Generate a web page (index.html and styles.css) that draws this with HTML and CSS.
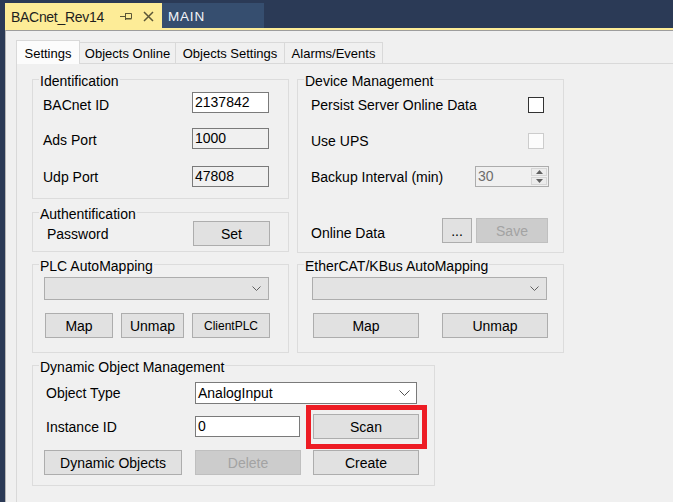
FILE: index.html
```html
<!DOCTYPE html>
<html>
<head>
<meta charset="utf-8">
<link rel="stylesheet" href="styles.css">
</head>
<body>
<div class="doc-tabs">
  <div class="doc-tab active">
    <span class="doc-title">BACnet_Rev14</span>
    <svg class="pin" width="12" height="8" viewBox="0 0 12 8"><path d="M0 3.5H5M5.5 0V7M5.5 0.5H11.5V5.5H5.5M5.5 6H11.5" fill="none" stroke="#5b5637" stroke-width="1"/></svg>
    <svg class="close" width="11" height="11" viewBox="0 0 11 11"><path d="M1 1L10 10M10 1L1 10" stroke="#5b5637" stroke-width="1.5"/></svg>
  </div>
  <div class="doc-tab main">MAIN</div>
</div>
<div class="well">
  <div class="panel">
    <div class="tabstrip">
      <div class="tab sel">Settings</div>
      <div class="tab w-online">Objects Online</div>
      <div class="tab w-osettings">Objects Settings</div>
      <div class="tab w-alarms">Alarms/Events</div>
    </div>
    <div class="page">
      <div class="row-top">
        <div class="col-left">
          <div class="group g-ident">
            <div class="gtitle">Identification</div>
            <div class="gbody">
              <div class="frow ident-r1"><span class="lbl nudge4">BACnet ID</span><div class="textbox w77">2137842</div></div>
              <div class="frow ident-r2"><span class="lbl nudge2">Ads Port</span><div class="textbox ro w77">1000</div></div>
              <div class="frow ident-r3"><span class="lbl">Udp Port</span><div class="textbox ro w77">47808</div></div>
            </div>
          </div>
          <div class="group g-auth">
            <div class="gtitle">Authentification</div>
            <div class="gbody">
              <div class="frow auth-r1"><span class="lbl">Password</span><div class="btn w77">Set</div></div>
            </div>
          </div>
        </div>
        <div class="group g-device">
          <div class="gtitle">Device Management</div>
          <div class="gbody">
            <div class="frow dev-r1"><span class="lbl">Persist Server Online Data</span><div class="check"></div></div>
            <div class="frow dev-r2"><span class="lbl">Use UPS</span><div class="check dis"></div></div>
            <div class="frow dev-r3"><span class="lbl">Backup Interval (min)</span>
              <div class="numeric"><span class="num-val">30</span>
                <div class="spin">
                  <div class="spin-btn"><svg width="7" height="4" viewBox="0 0 7 4"><path d="M0 4L3.5 0L7 4Z" fill="#606060"/></svg></div>
                  <div class="spin-btn"><svg width="7" height="4" viewBox="0 0 7 4"><path d="M0 0L3.5 4L7 0Z" fill="#606060"/></svg></div>
                </div>
              </div>
            </div>
            <div class="frow dev-r4"><span class="lbl nudge4">Online Data</span>
              <div class="btn-pair"><div class="btn w30">...</div><div class="btn dis w72">Save</div></div>
            </div>
          </div>
        </div>
      </div>
      <div class="row-mid">
        <div class="group g-plc">
          <div class="gtitle">PLC AutoMapping</div>
          <div class="gbody">
            <div class="combo plc-combo"><svg width="9" height="5" viewBox="0 0 9 5"><path d="M0.5 0.5L4.5 4.5L8.5 0.5" fill="none" stroke="#606060"/></svg></div>
            <div class="brow plc-btns">
              <div class="btn w68">Map</div>
              <div class="btn w63">Unmap</div>
              <div class="btn w78 small">ClientPLC</div>
            </div>
          </div>
        </div>
        <div class="group g-ecat">
          <div class="gtitle">EtherCAT/KBus AutoMapping</div>
          <div class="gbody">
            <div class="combo ecat-combo"><svg width="9" height="5" viewBox="0 0 9 5"><path d="M0.5 0.5L4.5 4.5L8.5 0.5" fill="none" stroke="#606060"/></svg></div>
            <div class="brow ecat-btns">
              <div class="btn w106">Map</div>
              <div class="btn w106">Unmap</div>
            </div>
          </div>
        </div>
      </div>
      <div class="group g-dyn">
        <div class="gtitle">Dynamic Object Management</div>
        <div class="gbody">
          <div class="drow dyn-r1"><span class="dlbl">Object Type</span>
            <div class="combo-white"><span>AnalogInput</span><svg width="11" height="6" viewBox="0 0 11 6"><path d="M0.5 0.5L5.5 5.5L10.5 0.5" fill="none" stroke="#505050"/></svg></div>
          </div>
          <div class="drow dyn-r2"><span class="dlbl">Instance ID</span>
            <div class="textbox w105">0</div>
            <div class="mark"><div class="btn w106">Scan</div></div>
          </div>
          <div class="drow dyn-r3">
            <div class="btn w138">Dynamic Objects</div>
            <div class="btn dis w106">Delete</div>
            <div class="btn w106">Create</div>
          </div>
        </div>
      </div>
    </div>
  </div>
</div>
</body>
</html>
```

FILE: styles.css
```css
* { box-sizing: border-box; }
html, body { margin: 0; }
body {
  background: #2b3a56;
  font-family: "Liberation Sans", Arial, sans-serif;
  font-size: 14px;
  color: #000;
  width: 673px;
  height: 502px;
  overflow: hidden;
}

/* document tabs */
.doc-tabs { display: flex; height: 28px; padding: 3px 0 0 5px; }
.doc-tab { height: 25px; display: flex; align-items: center; }
.doc-tab.active {
  width: 157px;
  background: #fdec97;
  color: #1e1e1e;
  padding: 2px 0 0 6px;
  font-size: 14px;
  letter-spacing: -0.3px;
}
.doc-title { flex: 1; white-space: nowrap; }
.pin { margin-right: 11px; flex-shrink: 0; }
.close { margin-right: 8px; flex-shrink: 0; }
.doc-tab.main {
  width: 102px;
  background: #364e6f;
  color: #f2f4f8;
  padding: 2px 0 0 6px;
  font-size: 13.5px;
  letter-spacing: 0.8px;
}

.well { margin-left: 5px; border-top: 2px solid #fdec97; height: 474px; }
.panel {
  height: 100%;
  background: #f0f0f0;
  border-top: 1px solid #9d9d9d;
  border-left: 1px solid #b5b5b5;
  padding: 9px 0 0 10px;
}

/* tab strip */
.tabstrip { display: flex; align-items: flex-end; height: 23px; position: relative; z-index: 1; }
.tab {
  height: 21px;
  border: 1px solid #d9d9d9;
  border-bottom: none;
  border-left: none;
  background: #f0f0f0;
  font-size: 13px;
  display: flex;
  align-items: center;
  justify-content: center;
  padding-top: 1px;
}
.tab.sel { width: 64px; height: 24px; margin-bottom: -1px; background: #fcfcfc; border-left: 1px solid #d9d9d9; }
.w-online { width: 96px; }
.w-osettings { width: 109px; }
.w-alarms { width: 98px; }

.page {
  border-top: 1px solid #d9d9d9;
  border-left: 1px solid #d9d9d9;
  padding: 15px 0 0 15px;
  height: 440px;
}

/* layout of groups */
.row-top { display: flex; gap: 8px; align-items: flex-start; }
.col-left { display: flex; flex-direction: column; gap: 13px; width: 257px; }
.row-mid { display: flex; gap: 8px; margin-top: 11px; }

.group { border: 1px solid #dcdcdc; display: flex; flex-direction: column; }
.gtitle {
  align-self: flex-start;
  margin: -7px 0 0 6px;
  padding: 0 1px;
  line-height: 16px;
  background: #f0f0f0;
  white-space: nowrap;
}
.gbody { display: flex; flex-direction: column; }

.frow { display: flex; align-items: center; justify-content: space-between; }
.lbl { white-space: nowrap; line-height: 16px; }
.nudge4 { padding-top: 4px; }
.nudge2 { padding-top: 2px; }

/* identification */
.g-ident { height: 120px; }
.g-ident .gbody { padding: 0 19px 0 10px; }
.ident-r1 { margin-top: 3px; height: 21px; }
.ident-r2 { margin-top: 15px; height: 21px; }
.ident-r3 { margin-top: 17px; height: 21px; }

/* authentification */
.g-auth { height: 40px; }
.g-auth .gbody { padding: 0 18px 0 14px; }
.auth-r1 { margin-top: -1px; height: 25px; }

/* device */
.g-device { width: 267px; height: 174px; }
.g-device .gbody { padding: 0 19px 0 13px; }
.dev-r1 { margin-top: 5px; height: 21px; }
.dev-r2 { margin-top: 15px; height: 21px; }
.dev-r3 { margin-top: 15px; height: 21px; }
.dev-r4 { margin-top: 31px; height: 25px; }

.check { width: 16px; height: 16px; border: 1px solid #333; background: #fff; }
.check.dis { border-color: #cccccc; background: #fcfcfc; }

.numeric {
  width: 74px;
  height: 21px;
  margin-right: -5px;
  border: 1px solid #acacac;
  background: #f0f0f0;
  color: #6d6d6d;
  display: flex;
}
.num-val { flex: 1; padding-left: 2px; line-height: 19px; }
.spin { width: 17px; display: flex; flex-direction: column; gap: 1px; padding: 1px 1px 1px 0; }
.spin-btn {
  flex: 1;
  border: 1px solid #d6d6d6;
  background: #ececec;
  display: flex;
  align-items: center;
  justify-content: center;
}

.btn-pair { display: flex; gap: 4px; margin-right: -4px; }

/* controls */
.textbox {
  height: 21px;
  border: 1px solid #7a7a7a;
  background: #fff;
  padding: 0 2px;
  line-height: 19px;
}
.textbox.ro { background: #f0f0f0; }
.btn {
  height: 25px;
  border: 1px solid #adadad;
  background: #e1e1e1;
  display: flex;
  align-items: center;
  justify-content: center;
  white-space: nowrap;
}
.btn.dis { background: #cccccc; border-color: #bfbfbf; color: #a3a3a3; }
.btn.small { font-size: 12px; }

.w30 { width: 30px; }
.w63 { width: 63px; }
.w68 { width: 68px; }
.w72 { width: 72px; }
.w77 { width: 77px; }
.w78 { width: 78px; }
.w105 { width: 105px; }
.w106 { width: 106px; }
.w138 { width: 138px; }

.combo {
  height: 23px;
  border: 1px solid #adadad;
  background: #e3e3e3;
  display: flex;
  align-items: center;
  justify-content: flex-end;
  padding-right: 7px;
}
.brow { display: flex; height: 25px; margin-top: 13px; }

/* PLC */
.g-plc { width: 257px; height: 89px; }
.g-plc .gbody { padding-left: 11px; }
.plc-combo { width: 225px; margin-top: 3px; }
.plc-btns { gap: 8px; padding-left: 1px; }

/* EtherCAT */
.g-ecat { width: 267px; height: 89px; }
.g-ecat .gbody { padding-left: 14px; }
.ecat-combo { width: 235px; margin-top: 3px; }
.ecat-btns { gap: 23px; padding-left: 1px; }

/* dynamic */
.g-dyn { width: 403px; height: 121px; margin-top: 12px; }
.g-dyn .gbody { padding-left: 11px; }
.drow { display: flex; align-items: center; }
.dlbl { width: 151px; padding-left: 2px; white-space: nowrap; }
.dyn-r1 { margin-top: 7px; height: 22px; }
.dyn-r2 { margin-top: 10px; height: 25px; }
.dyn-r2 .mark { margin-left: 6px; }
.dyn-r3 { margin-top: 11px; height: 25px; gap: 13px; }
.dyn-r3 .btn + .btn + .btn { margin-left: -1px; }

.combo-white {
  width: 222px;
  height: 22px;
  border: 1px solid #7a7a7a;
  background: #fff;
  display: flex;
  align-items: center;
  justify-content: space-between;
  padding: 0 6px 0 2px;
}

.mark {
  border: 5px solid #ed1c24;
  padding: 4px 3px 5px 2px;
  margin: -9px -8px -10px -7px;
}
```
